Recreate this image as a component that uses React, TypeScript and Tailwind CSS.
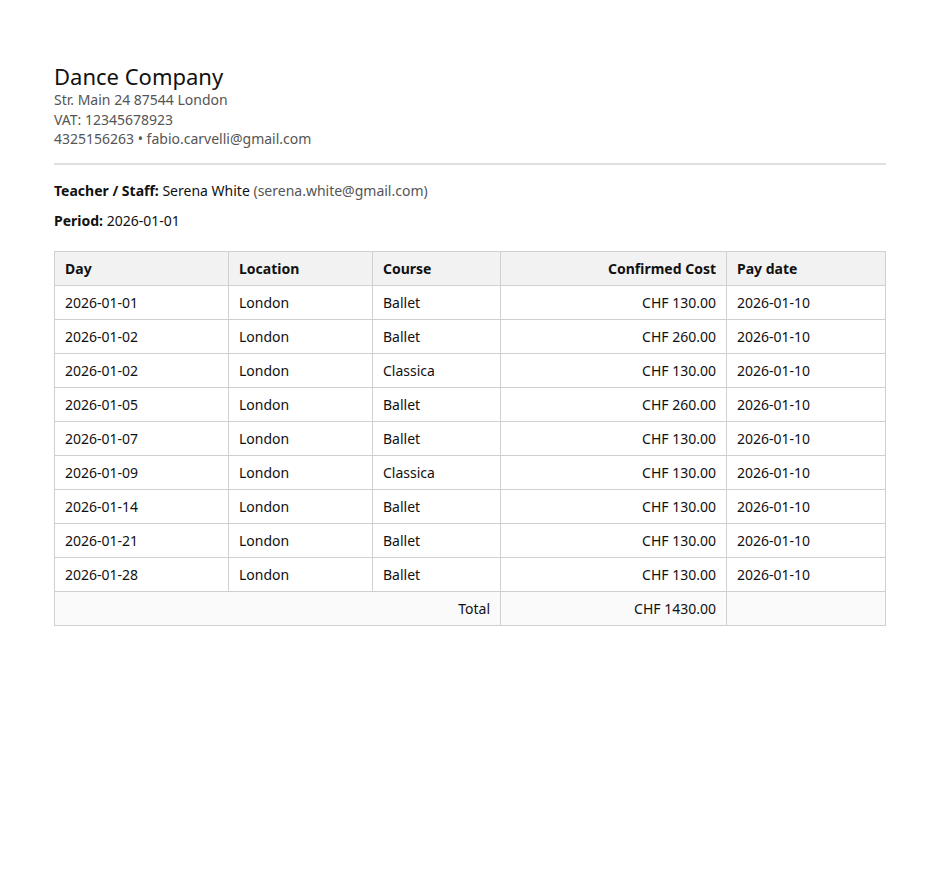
const rows = [
 ["2026-01-01", "London", "Ballet", "CHF 130.00"],
 ["2026-01-02", "London", "Ballet", "CHF 260.00"],
 ["2026-01-02", "London", "Classica", "CHF 130.00"],
 ["2026-01-05", "London", "Ballet", "CHF 260.00"],
 ["2026-01-07", "London", "Ballet", "CHF 130.00"],
 ["2026-01-09", "London", "Classica", "CHF 130.00"],
 ["2026-01-14", "London", "Ballet", "CHF 130.00"],
 ["2026-01-21", "London", "Ballet", "CHF 130.00"],
 ["2026-01-28", "London", "Ballet", "CHF 130.00"],
];

const cell = "border border-[#d0d0d0] px-[10px] h-[34px]";

export default function App() {
 return (
  <div className="min-h-screen bg-white px-[54px] pt-[62px] font-['DejaVu_Sans',sans-serif] text-[#111] text-[14px]">
   <h1 className="text-[22px] leading-[28px]">Dance Company</h1>
   <div className="text-[#555] text-[14px] leading-[19.5px]">
    <div>Str. Main 24 87544 London</div>
    <div>VAT: 12345678923</div>
    <div>4325156263 • fabio.carvelli@gmail.com</div>
   </div>
   <hr className="mt-[14px] border-0 h-[2px] bg-[#e0e0e0]" />
   <p className="mt-[16px] leading-[20px]">
    <b>Teacher / Staff:</b> Serena White <span className="text-[#555]">(serena.white@gmail.com)</span>
   </p>
   <p className="mt-[10px] leading-[20px]">
    <b>Period:</b> 2026-01-01
   </p>
   <table className="mt-[20px] w-full border-collapse">
    <colgroup>
     <col className="w-[174px]" />
     <col className="w-[144px]" />
     <col className="w-[128px]" />
     <col className="w-[226px]" />
     <col />
    </colgroup>
    <thead>
     <tr className="bg-[#f2f2f2] font-bold">
      <td className={cell}>Day</td>
      <td className={cell}>Location</td>
      <td className={cell}>Course</td>
      <td className={`${cell} text-right`}>Confirmed Cost</td>
      <td className={cell}>Pay date</td>
     </tr>
    </thead>
    <tbody>
     {rows.map((r, i) => (
      <tr key={i}>
       <td className={cell}>{r[0]}</td>
       <td className={cell}>{r[1]}</td>
       <td className={cell}>{r[2]}</td>
       <td className={`${cell} text-right`}>{r[3]}</td>
       <td className={cell}>2026-01-10</td>
      </tr>
     ))}
     <tr className="bg-[#fafafa]">
      <td colSpan={3} className={`${cell} text-right`}>Total</td>
      <td className={`${cell} text-right`}>CHF 1430.00</td>
      <td className={cell}></td>
     </tr>
    </tbody>
   </table>
  </div>
 );
}
